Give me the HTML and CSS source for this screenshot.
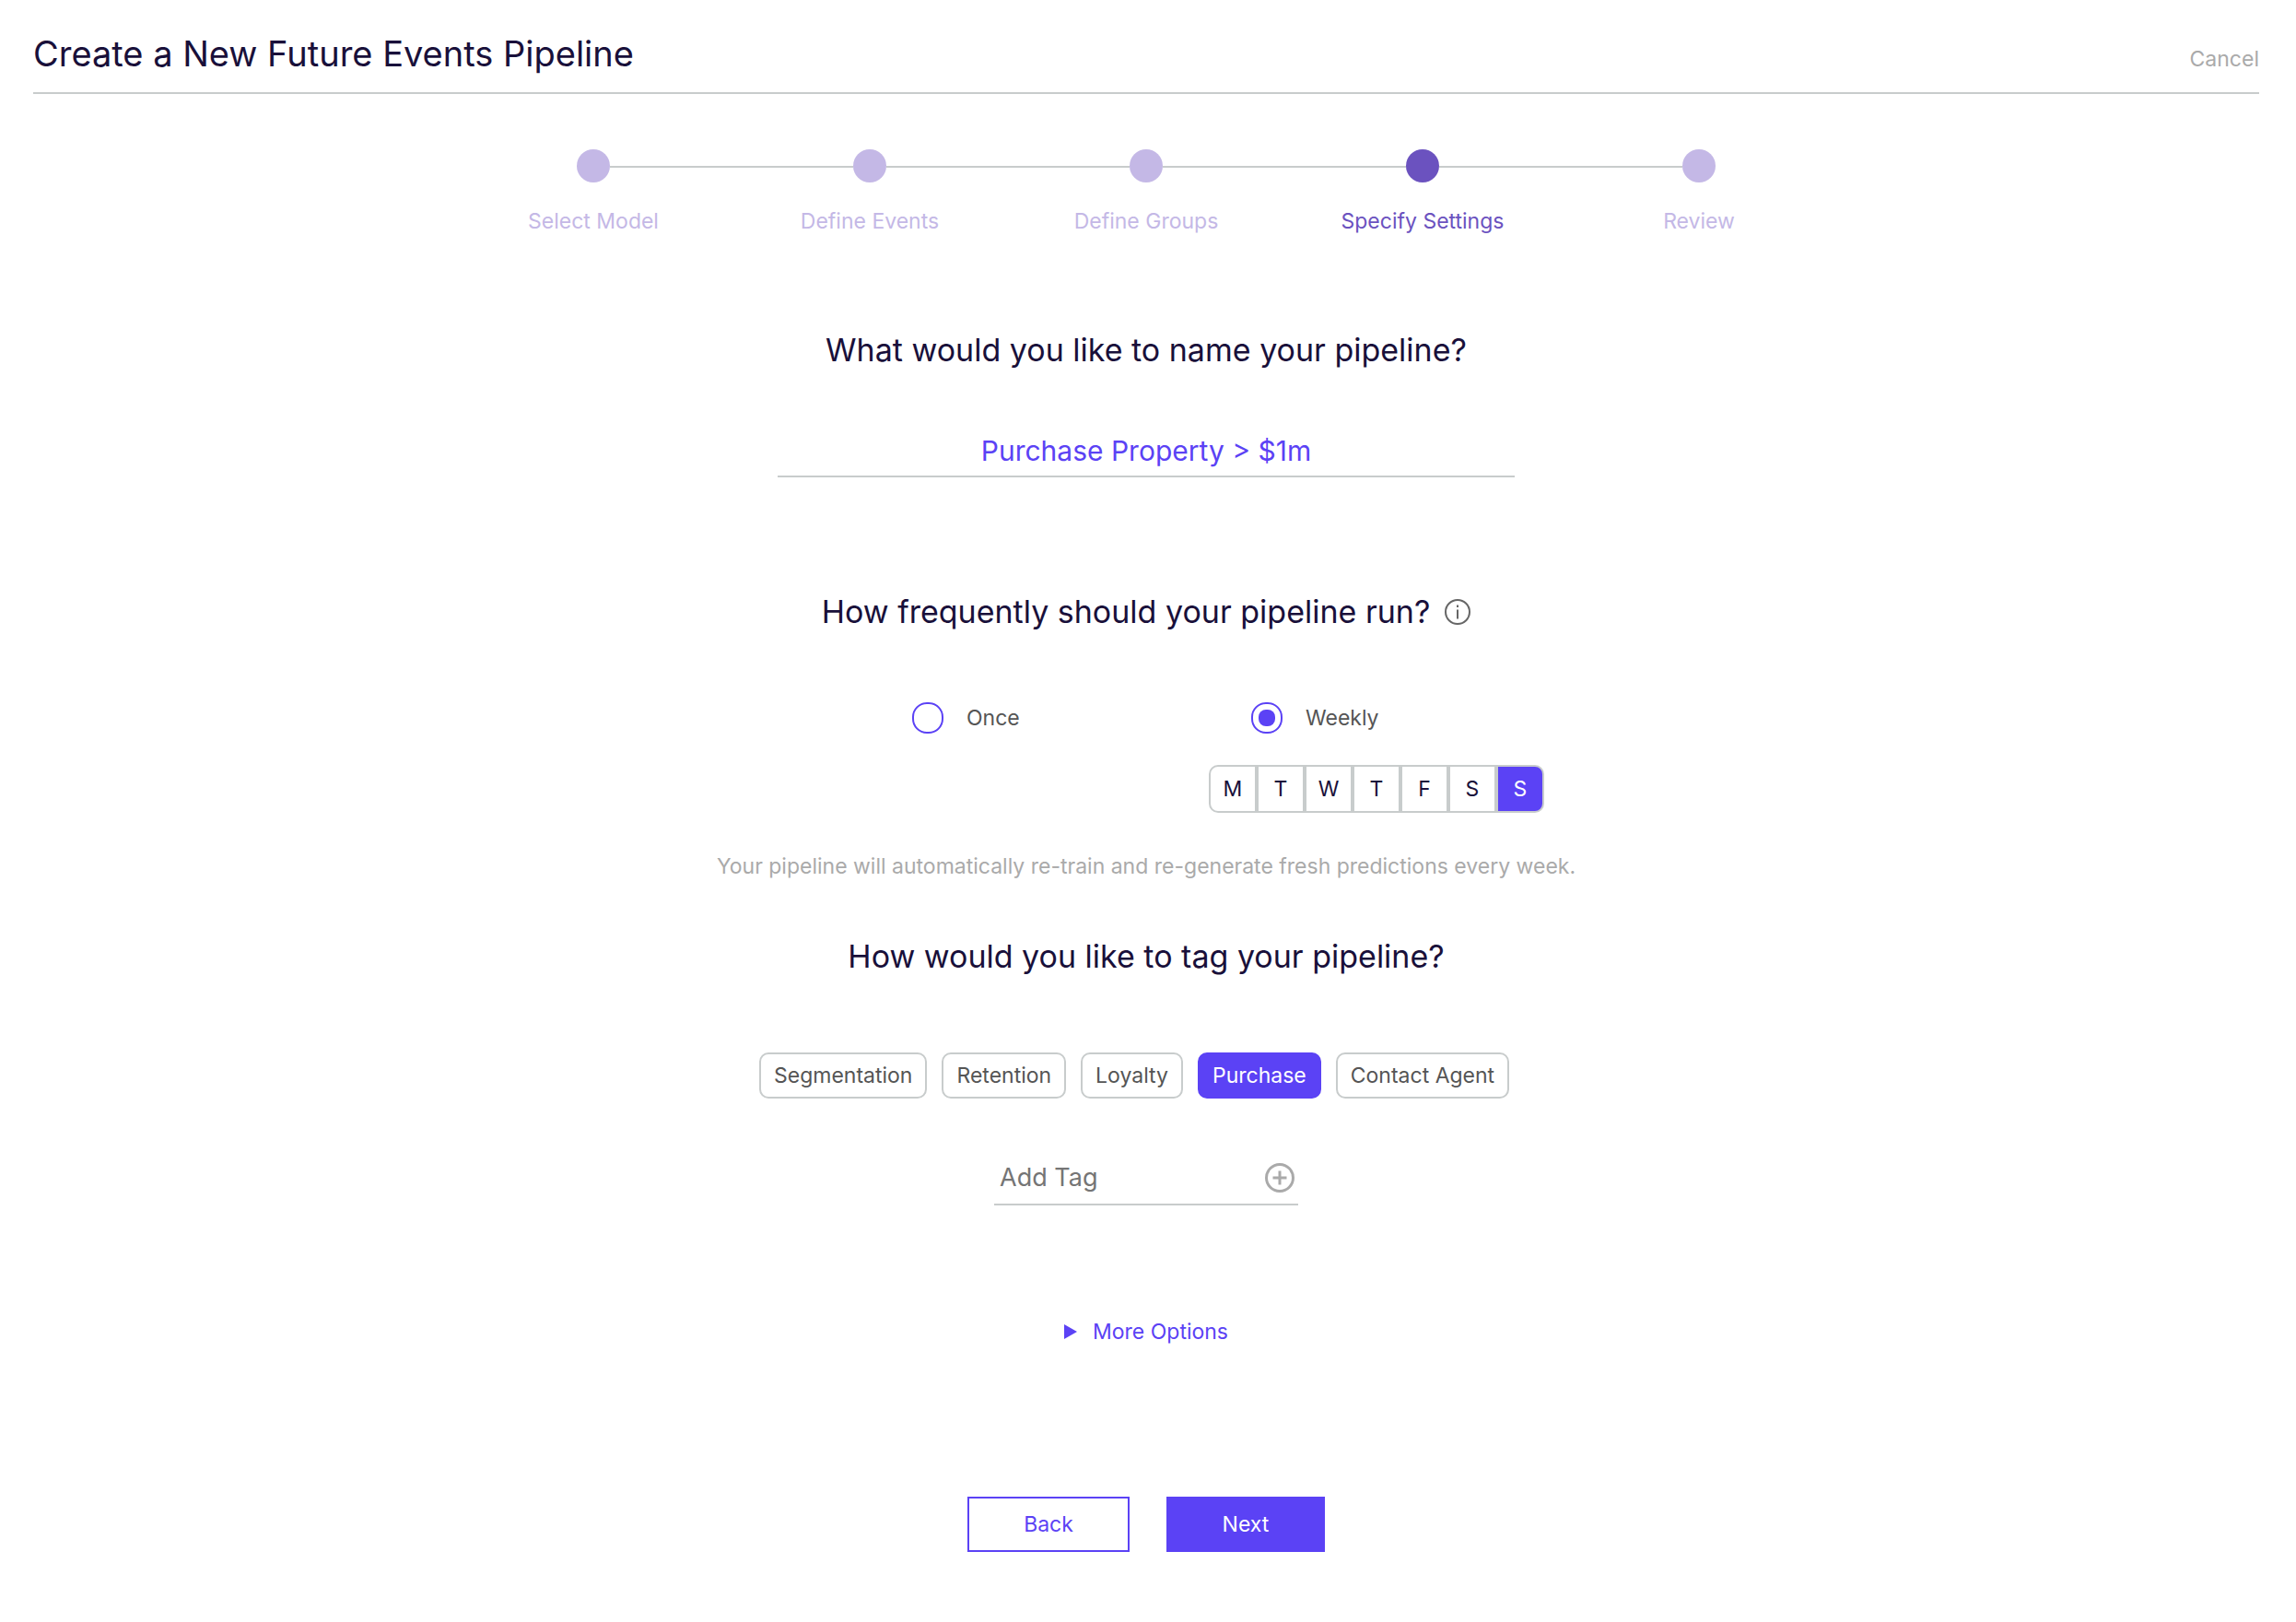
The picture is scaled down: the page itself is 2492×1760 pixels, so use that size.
FILE: index.html
```html
<!DOCTYPE html>
<html lang="en">
<head>
<meta charset="utf-8">
<meta name="viewport" content="width=device-width, initial-scale=1">
<title>Create a New Future Events Pipeline</title>
<link rel="stylesheet" href="styles.css">
</head>
<body>
<header class="header">
  <h1 class="title">Create a New Future Events Pipeline</h1>
  <a class="cancel" href="#cancel">Cancel</a>
</header>
<main class="main">
  <ol class="steps">
    <li class="step"><span class="marker"><span class="dot"></span></span>Select Model</li>
    <li class="step"><span class="marker"><span class="dot"></span></span>Define Events</li>
    <li class="step"><span class="marker"><span class="dot"></span></span>Define Groups</li>
    <li class="step current" aria-current="step"><span class="marker"><span class="dot"></span></span>Specify Settings</li>
    <li class="step"><span class="marker"><span class="dot"></span></span>Review</li>
  </ol>
  <form class="form">
    <section class="section name-section">
      <h2 class="question"><label for="name">What would you like to name your pipeline?</label></h2>
      <input class="name" id="name" type="text" value="Purchase Property &gt; $1m">
    </section>

    <section class="section run-section">
      <div class="question-row">
        <h2 class="question" id="run">How frequently should your pipeline run?</h2>
        <svg class="info" viewBox="0 0 28 28" role="img" aria-label="Info"><circle cx="14" cy="14" r="13"/><path d="M14 11.500V21.500M14 6.500V9"/></svg>
      </div>
      <div class="frequency" role="radiogroup" aria-labelledby="run">
        <label class="choice"><input class="radio" type="radio" name="frequency">Once</label>
        <label class="choice"><input class="radio" type="radio" name="frequency" checked>Weekly</label>
        <div class="days">
          <button class="day" type="button">M</button>
          <button class="day" type="button">T</button>
          <button class="day" type="button">W</button>
          <button class="day" type="button">T</button>
          <button class="day" type="button">F</button>
          <button class="day" type="button">S</button>
          <button class="day selected" type="button">S</button>
        </div>
      </div>
      <p class="hint">Your pipeline will automatically re-train and re-generate fresh predictions every week.</p>
    </section>

    <section class="section tag-section">
      <h2 class="question">How would you like to tag your pipeline?</h2>
      <div class="tags">
        <button class="tag" type="button">Segmentation</button>
        <button class="tag" type="button">Retention</button>
        <button class="tag" type="button">Loyalty</button>
        <button class="tag selected" type="button">Purchase</button>
        <button class="tag" type="button">Contact Agent</button>
      </div>
      <div class="add">
        <input class="add-input" type="text" placeholder="Add Tag" aria-label="Add Tag">
        <button class="add-button" type="button" aria-label="Add"><svg class="plus" viewBox="0 0 32 32"><circle cx="16" cy="16" r="14.500"/><path d="M16 8.500V23.500M8.500 16H23.500"/></svg></button>
      </div>
    </section>

    <button class="more" type="button"><svg class="arrow" viewBox="0 0 14 16"><path d="M0 0L14 8L0 16Z"/></svg>More Options</button>

    <div class="actions">
      <button class="action back" type="button">Back</button>
      <button class="action next" type="submit">Next</button>
    </div>
  </form>
</main>
</body>
</html>
```
FILE: styles.css
```css
:root {
  --accent: #5b42f5;
  --ink: #19103a;
  --text: #555;
  --muted: #aaa;
  --line: #c8cccc;
  --step: #c4b8e6;
  --step-current: #6b52bf;
}

* { box-sizing: border-box; }

body {
  margin: 0;
  padding: 34px 40px 76px 36px;
  background: #fff;
  color: var(--text);
  font: 23px/32px Inter, "Liberation Sans", sans-serif;
}

button, input {
  margin: 0;
  padding: 0;
  border: 0;
  background: none;
  color: inherit;
  font: inherit;
}

button { cursor: pointer; }

.header {
  display: flex;
  justify-content: space-between;
  align-items: baseline;
  padding-bottom: 18px;
  border-bottom: 2px solid var(--line);
}

.title {
  margin: 0;
  color: var(--ink);
  font-size: 38px;
  line-height: 48px;
  font-weight: 400;
}

.cancel { color: var(--muted); text-decoration: none; }

.main {
  display: flex;
  flex-direction: column;
  align-items: center;
}

.steps {
  display: grid;
  grid-template-columns: repeat(5, 1fr);
  width: 100%;
  max-width: 1500px;
  margin: 60px 0 0;
  padding: 0;
  list-style: none;
}

.step {
  display: flex;
  flex-direction: column;
  gap: 26px;
  color: var(--step);
  text-align: center;
}

.marker { display: flex; align-items: center; }

.marker::before,
.marker::after {
  content: "";
  flex: 1;
  height: 2px;
  margin-top: 2px;
  background: var(--line);
}

.step:first-child .marker::before,
.step:last-child .marker::after { background: none; }

.dot {
  width: 36px;
  height: 36px;
  border-radius: 50%;
  background: var(--step);
}

.current { color: var(--step-current); }
.current .dot { background: var(--step-current); }

.form, .section {
  display: flex;
  flex-direction: column;
  align-items: center;
  width: 100%;
}

.name-section { margin-top: 102px; }
.run-section { margin-top: 124px; }
.tag-section { margin-top: 60px; }

.question {
  margin: 0;
  color: var(--ink);
  font-size: 34px;
  line-height: 44px;
  font-weight: 400;
  text-align: center;
}

.question-row { display: flex; align-items: center; gap: 16px; }

.info {
  flex: none;
  width: 28px;
  height: 28px;
  fill: none;
  stroke: #666;
  stroke-width: 2;
}

.name {
  width: 100%;
  max-width: 800px;
  height: 50px;
  margin-top: 66px;
  padding-bottom: 7px;
  border-bottom: 2px solid var(--line);
  color: var(--accent);
  font-size: 30px;
  line-height: 40px;
  text-align: center;
}

.frequency {
  display: grid;
  grid-template-columns: 368px 364px;
  justify-content: end;
  row-gap: 34px;
  width: 100%;
  max-width: 864px;
  margin-top: 76px;
}

.choice {
  display: flex;
  align-items: center;
  gap: 25px;
  padding-left: 46px;
}

.radio {
  appearance: none;
  display: grid;
  place-items: center;
  width: 34px;
  height: 34px;
  border: 2px solid var(--accent);
  border-radius: 16px;
}

.radio:checked::before {
  content: "";
  width: 18px;
  height: 18px;
  border-radius: 8px;
  background: var(--accent);
}

.days { display: flex; grid-column: 2; }

.day {
  flex: 1;
  height: 52px;
  border: 2px solid var(--line);
  color: var(--ink);
}

.day:first-child { border-radius: 10px 0 0 10px; }
.day:last-child { border-radius: 0 10px 10px 0; }
.day.selected { background: var(--accent); color: #fff; }

.hint { margin: 42px 0 0; color: var(--muted); text-align: center; }

.tags {
  display: flex;
  flex-wrap: wrap;
  gap: 16px;
  width: 100%;
  max-width: 840px;
  margin-top: 82px;
}

.tag {
  height: 50px;
  padding: 0 14px;
  border: 2px solid var(--line);
  border-radius: 10px;
}

.tag.selected {
  border-color: var(--accent);
  background: var(--accent);
  color: #fff;
}

.add {
  display: flex;
  align-items: center;
  width: 100%;
  max-width: 330px;
  margin-top: 68px;
  padding: 0 4px 10px 6px;
  border-bottom: 2px solid var(--line);
}

.add-input {
  flex: 1;
  min-width: 0;
  height: 36px;
  font-size: 27px;
  line-height: 36px;
}

.add-input::placeholder { color: #757575; opacity: 1; }

.add-button { display: flex; }

.plus {
  width: 32px;
  height: 32px;
  fill: none;
  stroke: var(--muted);
  stroke-width: 3;
}

.more {
  display: flex;
  align-items: center;
  gap: 17px;
  margin-top: 121px;
  color: var(--accent);
}

.arrow { width: 14px; height: 16px; fill: currentColor; }

.actions { display: flex; gap: 40px; margin-top: 163px; }

.action { height: 60px; }

.back { width: 176px; border: 2px solid var(--accent); color: var(--accent); }
.next { width: 172px; background: var(--accent); color: #fff; }
```
